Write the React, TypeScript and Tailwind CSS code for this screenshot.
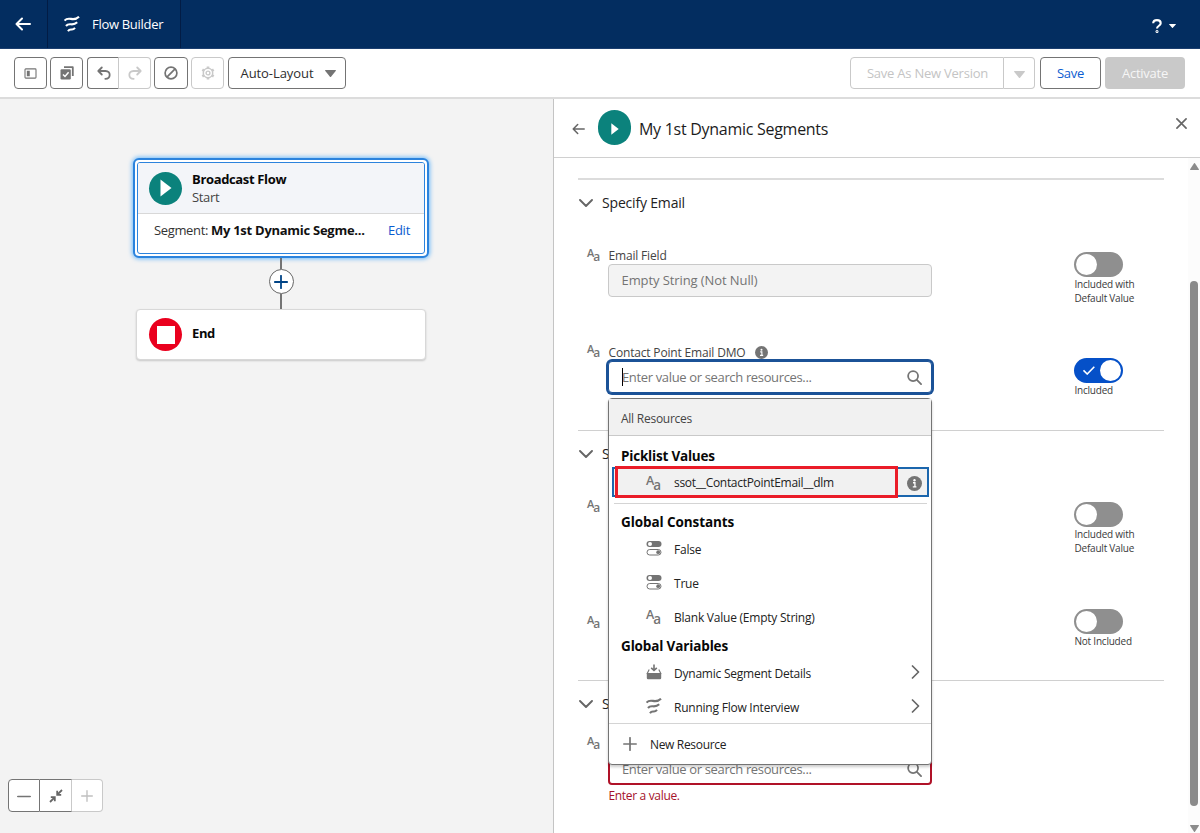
import type { ReactNode } from "react";

function FlowIcon({ className }: { className: string }) {
  return (
    <svg viewBox="0 0 16 16" className={className} fill="none" stroke="currentColor" strokeWidth="2.1">
      <path d="M0.6 4.6C2.4 2.2 4.6 2.5 7 2.9C10 3.4 12.8 2.9 15 0.7" />
      <path d="M2 10C3.6 7.9 5 8.1 7 8.3C9.4 8.5 11.4 8 13.2 6.3" />
      <path d="M4 15.2C5.2 13.2 6.2 13.4 7.6 13.5C9 13.6 10 13 11 11.8" />
    </svg>
  );
}

function TextIcon({ large }: { large?: boolean }) {
  return large ? (
    <span className="flex h-4 w-4 shrink-0 font-semibold leading-none tracking-normal text-[#747474]">
      <span className="text-[12.5px] leading-[12px]">A</span>
      <span className="-ml-px pt-[4px] text-[13.5px] leading-[12px]">a</span>
    </span>
  ) : (
    <span className="flex h-[14px] w-[14px] shrink-0 font-semibold leading-none tracking-normal text-[#747474]">
      <span className="text-[11px] leading-[10px]">A</span>
      <span className="-ml-px pt-[4px] text-[12px] leading-[10px]">a</span>
    </span>
  );
}

function BackArrow({ className }: { className: string }) {
  return (
    <svg viewBox="0 0 16 14" className={className} fill="none" stroke="currentColor" strokeLinecap="round" strokeLinejoin="round">
      <path d="M15 7H1.5M7 1.5L1.5 7L7 12.5" />
    </svg>
  );
}

function SearchIcon() {
  return (
    <svg viewBox="0 0 16 16" className="h-[15px] w-[15px] text-[#747474]" fill="none" stroke="currentColor" strokeWidth="1.9" strokeLinecap="round">
      <circle cx="6.5" cy="6.5" r="5.3" />
      <path d="M10.5 10.5L15 15" />
    </svg>
  );
}

function InfoIcon({ className }: { className: string }) {
  return (
    <svg viewBox="0 0 14 14" className={className}>
      <circle cx="7" cy="7" r="7" fill="#747474" />
      <circle cx="7" cy="4" r="1.1" fill="#fff" />
      <path d="M5.6 6.3H7.4V10M5.4 10.1H8.8" stroke="#fff" strokeWidth="1.2" fill="none" />
    </svg>
  );
}

function BooleanIcon() {
  return (
    <svg viewBox="0 0 16 16" className="-mt-[2px] h-4 w-4 shrink-0">
      <rect x="0.5" y="1" width="15" height="6" rx="3" fill="#747474" />
      <circle cx="4" cy="4" r="2" fill="#fff" />
      <rect x="1" y="9.5" width="14" height="5.5" rx="2.75" fill="#fff" stroke="#747474" />
      <circle cx="12.2" cy="12.2" r="1.9" fill="#747474" />
    </svg>
  );
}

function InboxIcon() {
  return (
    <svg viewBox="0 0 16 16" className="-mt-[2px] h-4 w-4 shrink-0">
      <path d="M8 0.5V6M5.2 3.8L8 6.5L10.8 3.8" fill="none" stroke="#747474" strokeWidth="1.6" />
      <path d="M3.2 5.5L1.2 9.5H14.8L12.8 5.5" fill="none" stroke="#747474" strokeWidth="1.1" />
      <rect x="0.8" y="9.3" width="14.4" height="6" rx="1.2" fill="#747474" />
    </svg>
  );
}

function Chevron({ className }: { className: string }) {
  return (
    <svg viewBox="0 0 14 8" className={className} fill="none" stroke="#666" strokeWidth="1.9" strokeLinecap="round" strokeLinejoin="round">
      <path d="M1 1L7 7L13 1" />
    </svg>
  );
}

function Caret({ className }: { className: string }) {
  return (
    <svg viewBox="0 0 10 6" className={className} fill="currentColor" preserveAspectRatio="none">
      <path d="M0.4 0H9.6Q10.2 0.2 9.7 0.8L5.5 5.7Q5 6.2 4.5 5.7L0.3 0.8Q-0.2 0.2 0.4 0Z" />
    </svg>
  );
}

function Header() {
  return (
    <header className="flex h-[49px] shrink-0 items-stretch border-b border-[#1c3f70] bg-[#032d60] text-white">
      <div className="flex w-12 items-center border-r border-[#021c45] pl-[15px]">
        <BackArrow className="h-[14px] w-4 stroke-2" />
      </div>
      <div className="flex w-[133px] items-center border-r border-[#021c45] pl-4">
        <FlowIcon className="h-4 w-4" />
        <span className="ml-3 pt-px text-[13px] tracking-[-0.3px]">Flow Builder</span>
      </div>
      <div className="ml-auto flex items-center pr-6">
        <svg viewBox="0 0 10 14" className="mt-[3px] h-[14px] w-[10px]" fill="none" stroke="currentColor" strokeWidth="2.1">
          <path d="M1.2 4.3C1.2 2.2 2.9 1.1 5 1.1C7.1 1.1 8.7 2.3 8.7 4.2C8.7 6.8 5 6.7 5 9.6" />
          <circle cx="5" cy="12.5" r="0.5" />
        </svg>
        <Caret className="ml-[7px] mt-[3px] h-1 w-[7px]" />
      </div>
    </header>
  );
}

const toolButton = "flex h-8 items-center justify-center border bg-white";

function Toolbar() {
  return (
    <div className="flex h-[50px] shrink-0 items-start border-b-2 border-[#dcdcdc] bg-white pl-[14px] pr-[15px] pt-2">
      <button className={`${toolButton} w-[33px] rounded border-[#747474] pr-px`}>
        <svg viewBox="0 0 14 12" className="h-[11px] w-[13px]">
          <rect x="1" y="1" width="12" height="10" rx="0.8" fill="#fff" stroke="#747474" strokeWidth="1.2" />
          <rect x="3" y="3" width="3.2" height="6" fill="#747474" />
        </svg>
      </button>
      <button className={`${toolButton} ml-[3px] w-[33px] rounded border-[#747474]`}>
        <svg viewBox="0 0 14 14" className="h-[14px] w-[14px]">
          <path d="M4 1.2H12.8V10" fill="none" stroke="#747474" strokeWidth="1.8" strokeLinejoin="round" />
          <rect x="0.5" y="3.2" width="10.3" height="10.3" rx="1.2" fill="#747474" />
          <path d="M3 8.5L5 10.5L8.6 6.3" fill="none" stroke="#fff" strokeWidth="1.5" />
        </svg>
      </button>
      <button className={`${toolButton} ml-1 w-8 rounded-l border-[#747474] border-r-[#c9c9c9] pl-px`}>
        <svg viewBox="0 0 14 14" className="h-[14px] w-[14px]" fill="none" stroke="#747474" strokeWidth="1.8" strokeLinecap="round" strokeLinejoin="round">
          <path d="M4.8 1.5L1.3 5L4.8 8.5M1.5 5H8.5C14.2 5 14 12.8 8.3 12.8" />
        </svg>
      </button>
      <button className={`${toolButton} w-8 rounded-r border-l-0 border-[#c9c9c9]`}>
        <svg viewBox="0 0 14 14" className="h-[14px] w-[14px]" fill="none" stroke="#c9c9c9" strokeWidth="1.8" strokeLinecap="round" strokeLinejoin="round">
          <path d="M9.2 1.5L12.7 5L9.2 8.5M12.5 5H5.5C-0.2 5 0 12.8 5.7 12.8" />
        </svg>
      </button>
      <button className={`${toolButton} ml-[3px] w-[34px] rounded border-[#747474]`}>
        <svg viewBox="0 0 14 14" className="h-[14px] w-[14px]" fill="none" stroke="#747474" strokeWidth="1.7">
          <circle cx="7" cy="7" r="5.9" />
          <path d="M2.9 11.1L11.1 2.9" />
        </svg>
      </button>
      <button className={`${toolButton} ml-[3px] w-[33px] rounded border-[#c9c9c9]`}>
        <svg viewBox="0 0 14 14" className="h-[14px] w-[14px]" fill="none" stroke="#c9c9c9">
          <circle cx="7" cy="7" r="1.9" strokeWidth="1.4" />
          <circle cx="7" cy="7" r="4.7" strokeWidth="1.5" />
          <path d="M7 0.4V2.6M7 11.4V13.6M1.3 3.7L3.2 4.8M10.8 9.2L12.7 10.3M1.3 10.3L3.2 9.2M10.8 4.8L12.7 3.7" strokeWidth="2.6" />
        </svg>
      </button>
      <button className={`${toolButton} ml-1 w-[118px] rounded border-[#747474] pl-[2px] text-[#2e2e2e]`}>
        <span className="pt-[2px] text-[13px] tracking-[-0.07px]">Auto-Layout</span>
        <Caret className="ml-[11px] h-[7px] w-[11px] text-[#747474]" />
      </button>
      <div className="ml-auto flex">
        <button className={`${toolButton} w-[154px] rounded-l border-[#c9c9c9] pt-[2px] pl-px text-[13px] tracking-[-0.23px] text-[#c4c4c4]`}>Save As New Version</button>
        <button className={`${toolButton} w-[31px] rounded-r border-l-0 border-[#c9c9c9] text-[#c9c9c9]`}>
          <Caret className="mt-[3px] h-[7px] w-[11px]" />
        </button>
        <button className={`${toolButton} ml-[5px] w-[61px] rounded border-[#747474] pt-[2px] text-[13px] tracking-[-0.3px] text-[#0b5cd0]`}>Save</button>
        <button className="ml-1 flex h-8 w-[80px] items-center justify-center rounded bg-[#c9c9c9] pt-[2px] text-[13px] tracking-[-0.25px] text-[#f6f6f6]">Activate</button>
      </div>
    </div>
  );
}

function Canvas() {
  return (
    <main className="flex w-[553px] shrink-0 flex-col bg-[#f3f3f3]">
      <div className="ml-[133px] mt-[59px] flex w-[296px] flex-col items-center">
        <div className="w-full rounded-md border-2 border-[#2b83dd] bg-white p-[2px] shadow-[0_0_4px_1px_rgba(27,150,255,0.6)]">
          <div className="h-[92px] rounded-[3px] border border-[#2b83dd]">
            <div className="flex h-[51px] items-center rounded-t-[2px] border-b border-[#d8d8d8] bg-[#f3f5f9] pl-[11px]">
              <span className="flex h-[33px] w-[33px] items-center justify-center rounded-full bg-[#0b827c]">
                <svg viewBox="0 0 12 18" className="ml-[1px] h-[18px] w-3" fill="#fff"><path d="M0.5 0.5L11.5 9L0.5 17.5Z" /></svg>
              </span>
              <div className="-mt-px ml-[10px] text-[13px] leading-[18px]">
                <div className="font-bold tracking-[-0.35px] text-[#080808]">Broadcast Flow</div>
                <div className="tracking-[-0.35px] text-[#444]">Start</div>
              </div>
            </div>
            <div className="flex h-[34px] items-center pl-4 pr-[14px] text-[13px]">
              <span className="tracking-[-0.36px] text-[#333]">Segment:</span>
              <span className="ml-[3px] font-bold tracking-[-0.27px] text-[#111]">My 1st Dynamic Segme...</span>
              <span className="ml-auto tracking-[-0.27px] text-[#0b5cd0]">Edit</span>
            </div>
          </div>
        </div>
        <div className="h-[11px] w-[2px] bg-[#747474]" />
        <div className="flex h-[25px] w-[25px] items-center justify-center rounded-full border-[1.5px] border-[#666] bg-white">
          <svg viewBox="0 0 14 14" className="h-[14px] w-[14px]" stroke="#014486" strokeWidth="1.8" strokeLinecap="round"><path d="M7 0.8V13.2M0.8 7H13.2" /></svg>
        </div>
        <div className="h-[15px] w-[2px] bg-[#747474]" />
        <div className="flex h-[51px] w-[290px] items-center rounded border border-[#d8d8d8] bg-white pl-3 shadow-[0_1px_2px_rgba(0,0,0,0.18)]">
          <span className="flex h-[33px] w-[33px] items-center justify-center rounded-full bg-[#ea001e]">
            <span className="h-[18px] w-[18px] bg-white" />
          </span>
          <span className="mb-px ml-[10px] text-[13px] font-bold tracking-[-0.35px] text-[#080808]">End</span>
        </div>
      </div>
      <div className="mb-[21px] ml-2 mt-auto flex">
        <button className={`${toolButton} h-[33px] w-8 rounded-l border-[#747474]`}>
          <svg viewBox="0 0 14 14" className="h-[14px] w-[14px]" stroke="#747474" strokeWidth="1.7" strokeLinecap="round"><path d="M0.8 7.5H13.2" /></svg>
        </button>
        <button className={`${toolButton} h-[33px] w-8 border-l-0 border-[#747474] border-r-[#c9c9c9]`}>
          <svg viewBox="0 0 14 14" className="h-[14px] w-[14px]" fill="none" stroke="#666" strokeWidth="1.8">
            <path d="M13 1L8.6 5.4M8.2 1.8V5.8H12.2M1 13L5.4 8.6M5.8 12.2V8.2H1.8" />
          </svg>
        </button>
        <button className={`${toolButton} h-[33px] w-[31px] rounded-r border-l-0 border-[#c9c9c9]`}>
          <svg viewBox="0 0 14 14" className="h-[12px] w-[12px]" stroke="#c0c0c0" strokeWidth="1.6" strokeLinecap="round"><path d="M7 0.8V13.2M0.8 7H13.2" /></svg>
        </button>
      </div>
    </main>
  );
}

function Toggle({ on, label }: { on?: boolean; label: string[] }) {
  return (
    <div className="w-[90px]">
      {on ? (
        <div className="flex h-[25px] w-[49px] items-center justify-between rounded-full bg-[#0550c8] pl-[9px] pr-[2px]">
          <svg viewBox="0 0 12 9" className="h-[9px] w-3" fill="none" stroke="#fff" strokeWidth="1.6"><path d="M0.5 4.3L4.2 8L11.3 0.8" /></svg>
          <span className="h-[21px] w-[21px] rounded-full bg-white" />
        </div>
      ) : (
        <div className="flex h-[25px] w-[49px] items-center rounded-full bg-[#8f8f8f] pl-[2px]">
          <span className="h-[21px] w-[21px] rounded-full bg-white" />
        </div>
      )}
      <div className="pl-[0.5px] text-[10px] leading-[14px] tracking-[-0.22px] text-[#3a3a3a]">
        {label.map((line) => <div key={line}>{line}</div>)}
      </div>
    </div>
  );
}

function Section({ title, className, children }: { title: string; className: string; children: ReactNode }) {
  return (
    <section className={`w-[586px] border-[#d0d0d0] ${className}`}>
      <div className="flex h-[46px] items-center pl-px">
        <Chevron className="h-2 w-[14px]" />
        <span className="mb-[2px] ml-[9px] text-[14px] tracking-[-0.18px] text-[#222]">{title}</span>
      </div>
      {children}
    </section>
  );
}

function ResourceItem({ icon, label, more }: { icon: ReactNode; label: string; more?: boolean }) {
  return (
    <li className="flex h-[34px] items-center pl-[37px] pr-[11px]">
      {icon}
      <span className="ml-3 pt-px text-[12px] tracking-[-0.23px] text-[#222]">{label}</span>
      {more && (
        <svg viewBox="0 0 8 14" className="mb-[2px] ml-auto h-[14px] w-[9px]" fill="none" stroke="#666" strokeWidth="1.7" strokeLinecap="round" strokeLinejoin="round"><path d="M1 1L7 7L1 13" /></svg>
      )}
    </li>
  );
}

function ResourceMenu() {
  return (
    <div className="absolute left-[-1px] top-9 z-10 h-[367px] w-[324px] rounded-sm border border-[#747474] bg-white shadow-[0_2px_3px_rgba(0,0,0,0.2)]">
      <div className="flex h-[37px] items-center border-b border-[#c9c9c9] bg-[#f1f1f1] pl-3 pt-[3px] text-[12px] tracking-[-0.25px] text-[#444]">All Resources</div>
      <h3 className="h-[31px] pl-3 pt-[11px] text-[13.5px] font-bold leading-[18px] tracking-[-0.2px] text-[#080808]">Picklist Values</h3>
      <div className="relative ml-[3px] flex h-[30px] w-[317px] items-center border-2 border-[#1b66ad] bg-[#f1f1f1] pl-8 pr-[5px] pt-[2px]">
        <div className="absolute left-px top-[-3px] h-8 w-[283px] border-[3px] border-[#ea1c28]" />
        <TextIcon large />
        <span className="ml-3 text-[12px] tracking-[-0.3px] text-[#222]">ssot__ContactPointEmail__dlm</span>
        <InfoIcon className="ml-auto h-[15px] w-[15px]" />
      </div>
      <div className="ml-[5px] mr-1 mt-[6px] h-px bg-[#d4d4d4]" />
      <h3 className="h-7 pl-3 pt-[9px] text-[13.5px] font-bold leading-[18px] tracking-[-0.09px] text-[#080808]">Global Constants</h3>
      <ul>
        <ResourceItem icon={<BooleanIcon />} label="False" />
        <ResourceItem icon={<BooleanIcon />} label="True" />
        <ResourceItem icon={<TextIcon large />} label="Blank Value (Empty String)" />
      </ul>
      <h3 className="h-[22px] pl-3 pt-[3px] text-[13.5px] font-bold leading-[18px] tracking-[-0.14px] text-[#080808]">Global Variables</h3>
      <ul className="-mb-px">
        <ResourceItem icon={<InboxIcon />} label="Dynamic Segment Details" more />
        <ResourceItem icon={<FlowIcon className="-mt-[2px] h-4 w-4 shrink-0 text-[#747474]" />} label="Running Flow Interview" more />
      </ul>
      <div className="flex h-[42px] items-center border-t border-[#d4d4d4] pl-[14px]">
        <svg viewBox="0 0 14 14" className="mb-px h-[14px] w-[14px]" stroke="#747474" strokeWidth="1.7" strokeLinecap="round"><path d="M7 0.8V13.2M0.8 7H13.2" /></svg>
        <span className="ml-[13px] text-[12px] tracking-[-0.33px] text-[#222]">New Resource</span>
      </div>
    </div>
  );
}

function FieldLabel({ children }: { children: ReactNode }) {
  return <div className="flex h-[17px] items-center pl-[0.5px] text-[12px] tracking-[-0.17px] text-[#444]">{children}</div>;
}

function Panel() {
  return (
    <aside className="flex min-w-0 grow flex-col border-l border-[#c4c4c4] bg-white">
      <div className="flex h-[59px] shrink-0 items-center border-b border-[#d0d0d0] pl-[18px] pr-[13px]">
        <BackArrow className="mt-px h-3 w-[13px] stroke-[1.9] text-[#666]" />
        <span className="-mt-px ml-[13px] flex h-[35px] w-[33px] items-center justify-center rounded-full bg-[#0b827c]">
          <svg viewBox="0 0 8 12" className="mt-[3px] h-3 w-2" fill="#fff"><path d="M0.3 0.3L7.7 6L0.3 11.7Z" /></svg>
        </span>
        <h2 className="ml-2 pt-px text-[16px] tracking-[-0.28px] text-[#1c1c1c]">My 1st Dynamic Segments</h2>
        <svg viewBox="0 0 12 12" className="mb-[10px] ml-auto h-[11px] w-[11px]" stroke="#666" strokeWidth="1.8" strokeLinecap="round"><path d="M1 1L11 11M11 1L1 11" /></svg>
      </div>
      <div className="flex min-h-0 grow overflow-hidden pl-6">
        <div className="w-[586px] shrink-0">
          <Section title="Specify Email" className="mt-5 h-[252px] border-t-2 border-t-[#dcdcdc]">
            <div className="mt-[21px] flex h-[97px]">
              <div className="w-[30px] pl-[9px] pt-px"><TextIcon /></div>
              <div className="w-[324px]">
                <FieldLabel>Email Field</FieldLabel>
                <div className="flex h-[33px] items-center rounded border border-[#c9c9c9] bg-[#f3f3f3] pl-[12.5px] pt-px text-[13px] tracking-[-0.09px] text-[#747474]">Empty String (Not Null)</div>
              </div>
              <div className="ml-auto pt-[5px]"><Toggle label={["Included with", "Default Value"]} /></div>
            </div>
            <div className="flex">
              <div className="w-[30px] pl-[9px]"><TextIcon /></div>
              <div className="w-[324px]">
                <FieldLabel>
                  Contact Point Email DMO
                  <InfoIcon className="ml-[9px] h-[13px] w-[13px]" />
                </FieldLabel>
                <div className="relative flex h-8 items-center rounded border border-[#1b5297] bg-white pl-[13px] pr-[9px] text-[13px] tracking-[-0.35px] text-[#747474] ring-2 ring-[#1b5297]">
                  <span className="h-[18px] w-px bg-black" />
                  <span className="-ml-px pt-px">Enter value or search resources...</span>
                  <span className="ml-auto pt-px"><SearchIcon /></span>
                  <ResourceMenu />
                </div>
              </div>
              <div className="ml-auto pt-[14px]"><Toggle on label={["Included"]} /></div>
            </div>
          </Section>
          <Section title="S" className="h-[250px] border-t">
            <div className="mt-[22px] flex h-[115px]">
              <div className="pl-[9px]"><TextIcon /></div>
              <div className="ml-auto pt-[3px]"><Toggle label={["Included with", "Default Value"]} /></div>
            </div>
            <div className="flex">
              <div className="pl-[9px] pt-px"><TextIcon /></div>
              <div className="-mt-[5px] ml-auto"><Toggle label={["Not Included"]} /></div>
            </div>
          </Section>
          <Section title="S" className="border-t">
            <div className="mt-2 flex">
              <div className="w-[30px] pl-[9px] pt-px"><TextIcon /></div>
              <div className="w-[324px] pt-[17px]">
                <div className="flex h-[33px] items-center rounded border-2 border-[#b01228] pl-[12px] pr-2 pt-[2px] text-[13px] tracking-[-0.35px] text-[#747474]">
                  Enter value or search resources...
                  <span className="ml-auto"><SearchIcon /></span>
                </div>
                <div className="pl-[0.5px] pt-[2px] text-[12px] leading-[18px] tracking-[-0.33px] text-[#a5122a]">Enter a value.</div>
              </div>
            </div>
          </Section>
        </div>
        <div className="ml-auto flex w-[12px] shrink-0 flex-col items-center bg-[#fcfcfc] pt-[5px]">
          <Caret className="h-[7px] w-[9px] rotate-180 text-[#8b8b8b]" />
          <div className="mt-[111px] h-[525px] w-2 rounded-full bg-[#8b8b8b]" />
          <Caret className="mt-[19px] h-[7px] w-[9px] shrink-0 text-[#8b8b8b]" />
        </div>
      </div>
    </aside>
  );
}

export default function App() {
  return (
    <div className="flex h-[833px] w-[1200px] flex-col overflow-hidden bg-white font-['Open_Sans','Noto_Sans',sans-serif] leading-normal">
      <Header />
      <Toolbar />
      <div className="flex min-h-0 grow">
        <Canvas />
        <Panel />
      </div>
    </div>
  );
}
